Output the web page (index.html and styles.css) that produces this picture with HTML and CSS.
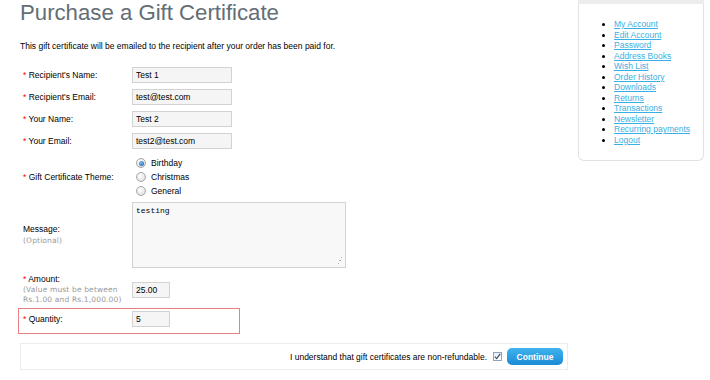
FILE: index.html
```html
<!DOCTYPE html>
<html>
<head>
<meta charset="utf-8">
<title>Purchase a Gift Certificate</title>
<link rel="stylesheet" href="styles.css">
</head>
<body>
<div class="page">
  <main class="content">
    <h1 class="title">Purchase a Gift Certificate</h1>
    <p class="intro">This gift certificate will be emailed to the recipient after your order has been paid for.</p>
    <div class="form">
      <div class="row">
        <div class="label"><span class="req">*</span> Recipient's Name:</div>
        <input class="field" type="text" value="Test 1">
      </div>
      <div class="row">
        <div class="label"><span class="req">*</span> Recipient's Email:</div>
        <input class="field" type="text" value="test@test.com">
      </div>
      <div class="row">
        <div class="label"><span class="req">*</span> Your Name:</div>
        <input class="field" type="text" value="Test 2">
      </div>
      <div class="row">
        <div class="label"><span class="req">*</span> Your Email:</div>
        <input class="field" type="text" value="test2@test.com">
      </div>
      <div class="row row-radios">
        <div class="label"><span class="req">*</span> Gift Certificate Theme:</div>
        <div class="radios">
          <label class="radio-line"><span class="radio checked"></span>Birthday</label>
          <label class="radio-line"><span class="radio"></span>Christmas</label>
          <label class="radio-line"><span class="radio"></span>General</label>
        </div>
      </div>
      <div class="row row-message">
        <div class="label">Message:<br><span class="help">(Optional)</span></div>
        <textarea class="message">testing</textarea>
      </div>
      <div class="row row-amount">
        <div class="label"><span class="req">*</span> Amount:<br><span class="help">(Value must be between<br>Rs.1.00 and Rs.1,000.00)</span></div>
        <input class="field small" type="text" value="25.00">
      </div>
      <div class="row row-quantity">
        <div class="label"><span class="req">*</span> Quantity:</div>
        <input class="field small" type="text" value="5">
      </div>
    </div>
    <div class="buttons">
      <span class="agree">I understand that gift certificates are non-refundable.</span>
      <span class="checkbox"><svg width="7" height="7" viewBox="0 0 7 7"><path d="M0.8 3.6 L2.6 5.6 L6.2 0.8" fill="none" stroke="#3b4f6a" stroke-width="1.2"/></svg></span>
      <span class="button">Continue</span>
    </div>
  </main>
  <aside class="sidebar">
    <div class="box-heading"></div>
    <div class="box-content">
      <ul class="links">
        <li><a href="#">My Account</a></li>
        <li><a href="#">Edit Account</a></li>
        <li><a href="#">Password</a></li>
        <li><a href="#">Address Books</a></li>
        <li><a href="#">Wish List</a></li>
        <li><a href="#">Order History</a></li>
        <li><a href="#">Downloads</a></li>
        <li><a href="#">Returns</a></li>
        <li><a href="#">Transactions</a></li>
        <li><a href="#">Newsletter</a></li>
        <li><a href="#">Recurring payments</a></li>
        <li><a href="#">Logout</a></li>
      </ul>
    </div>
  </aside>
</div>
</body>
</html>
```

FILE: styles.css
```css
html, body {
  margin: 0;
  padding: 0;
  background: #fff;
}
body {
  font-family: "Liberation Sans", Arial, sans-serif;
  font-size: 8.5px;
  color: #000;
}
.page {
  display: flex;
  align-items: flex-start;
  gap: 10px;
  padding-left: 20px;
  width: 684px;
}
.content {
  width: 548px;
  flex: none;
}
.title {
  margin: 0;
  font-weight: normal;
  font-size: 22.2px;
  line-height: 26px;
  color: #636e75;
}
.intro {
  margin: 15px 0 12px;
  line-height: 11px;
}
.form {
  display: flex;
  flex-direction: column;
}
.row {
  display: flex;
  align-items: center;
  height: 22px;
}
.label {
  width: 109px;
  padding-left: 3px;
  flex: none;
  line-height: 11px;
}
.req {
  color: #f00;
}
.field {
  appearance: none;
  box-sizing: border-box;
  width: 100px;
  height: 16px;
  margin: 0;
  padding: 0 3px;
  border: 1px solid #d2d2d2;
  background: #f5f5f5;
  font-family: "Liberation Sans", Arial, sans-serif;
  font-size: 8.5px;
  color: #000;
  outline: none;
}
.field.small {
  width: 38px;
}
.row-radios {
  height: auto;
  padding: 4px 0 2px;
}
.radios {
  display: flex;
  flex-direction: column;
}
.radio-line {
  display: flex;
  align-items: center;
  height: 14px;
  font-size: 8.5px;
}
.radio {
  box-sizing: border-box;
  width: 10px;
  height: 10px;
  margin: 0 5px 0 4px;
  border-radius: 50%;
  border: 1px solid #a6a6a6;
  background: radial-gradient(circle at 40% 35%, #ffffff 0%, #e4e4e4 70%, #d0d0d0 100%);
  position: relative;
}
.radio.checked::after {
  content: "";
  position: absolute;
  left: 1.5px;
  top: 1.5px;
  width: 5px;
  height: 5px;
  border-radius: 50%;
  background: radial-gradient(circle at 40% 35%, #7fc0f0 0%, #2f74b8 70%, #1d4f8c 100%);
}
.row-message {
  height: auto;
  padding: 2px 0 3px;
}
.message {
  box-sizing: border-box;
  width: 214px;
  height: 66px;
  margin: 0;
  padding: 3px;
  border: 1px solid #d2d2d2;
  background-color: #f8f8f8;
  background-image:
    radial-gradient(circle, #b0b0b0 0.7px, transparent 0.9px),
    radial-gradient(circle, #b0b0b0 0.7px, transparent 0.9px),
    radial-gradient(circle, #b0b0b0 0.7px, transparent 0.9px);
  background-repeat: no-repeat;
  background-size: 3px 3px, 6px 3px, 9px 3px;
  background-position: right 2px bottom 8px, right 2px bottom 5px, right 2px bottom 2px;
  resize: none;
  font-family: "Liberation Mono", "Courier New", monospace;
  font-size: 8px;
  line-height: 10px;
  color: #000;
  outline: none;
}
.help {
  font-family: "DejaVu Sans", Verdana, sans-serif;
  font-size: 7.5px;
  line-height: 10px;
  color: #999;
  letter-spacing: 0.15px;
}
.row-amount {
  height: auto;
  padding: 3px 0 2px;
}
.row-amount .label {
  line-height: 11px;
}
.row-amount .help {
  display: inline-block;
  line-height: 10px;
}
.row-quantity {
  box-sizing: border-box;
  width: 222px;
  height: 26px;
  margin: 1px 0 0 -2px;
  padding: 1px 0 5px 1px;
  border: 1px solid #e78080;
}
.buttons {
  box-sizing: border-box;
  display: flex;
  align-items: center;
  justify-content: flex-end;
  height: 27px;
  margin-top: 9px;
  padding: 0 4px 0 0;
  border: 1px solid #ececec;
}
.agree {
  margin-right: 6px;
}
.checkbox {
  box-sizing: border-box;
  display: flex;
  align-items: center;
  justify-content: center;
  width: 9px;
  height: 9px;
  border: 1px solid #8fa3bd;
  background: linear-gradient(#e9eef5, #ffffff);
  margin-right: 5px;
}
.button {
  box-sizing: border-box;
  display: flex;
  align-items: center;
  justify-content: center;
  width: 56px;
  height: 17px;
  border-radius: 5px;
  background: linear-gradient(#3fb4ee, #1b8bd6);
  color: #fff;
  font-weight: bold;
  font-size: 8.5px;
}
.sidebar {
  width: 126px;
  flex: none;
}
.box-heading {
  height: 4px;
  background: #ececec;
}
.box-content {
  border: 1px solid #e2e2e2;
  border-top: none;
  border-radius: 0 0 6px 6px;
  padding: 15px 10px 15px;
}
.links {
  margin: 0;
  padding-left: 25px;
  list-style: disc;
}
.links li {
  line-height: 10.5px;
}
.links a {
  color: #38b0e3;
  text-decoration: underline;
}
```
